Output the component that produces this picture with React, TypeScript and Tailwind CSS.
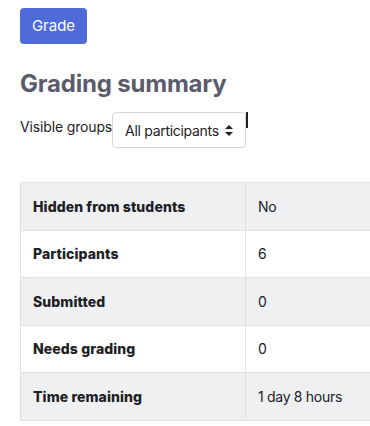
const rows = [
  { label: "Hidden from students", value: "No" },
  { label: "Participants", value: "6" },
  { label: "Submitted", value: "0" },
  { label: "Needs grading", value: "0" },
  { label: "Time remaining", value: "1 day 8 hours" },
];

export default function App() {
  return (
    <div className="w-[370px] h-[426px] overflow-hidden bg-white font-['Inter',sans-serif] text-[#1d2125]">
      <div className="pl-5 pt-2">
        <button className="h-9 w-[67px] rounded-[4px] bg-[#4f6bd8] text-[15px] text-white">
          Grade
        </button>
        <h2 className="mt-[25px] text-[24px] font-bold leading-[30px] tracking-[-0.2px] text-[#5b5c6b]">
          Grading summary
        </h2>
        <div className="mt-[13px] flex items-start">
          <span className="pt-[4px] text-[14px] tracking-[-0.15px]">Visible groups</span>
          <div className="flex h-9 w-[134px] items-center rounded-[4px] border border-[#d3d7dc] pl-3 text-[14px] tracking-[-0.3px]">
            All participants
            <svg width="8" height="11" viewBox="0 0 8 11" className="ml-[6px]">
              <path d="M4 0 L8 4 L0 4 Z M0 7 L8 7 L4 11 Z" fill="#1d2125" />
            </svg>
          </div>
          <div className="h-4 w-[1.5px] bg-[#1d2125]" />
        </div>
        <table className="mt-[34px] w-[400px] border-collapse text-[14px]">
          <tbody>
            {rows.map((r, i) => (
              <tr key={r.label} className={i % 2 === 0 ? "bg-[#eff0f2]" : "bg-white"}>
                <td className="h-[47.5px] w-[225px] border border-[#dee2e6] px-3 font-extrabold tracking-[0.1px]">{r.label}</td>
                <td className="h-[47.5px] border border-[#dee2e6] px-3 tracking-[-0.3px]">{r.value}</td>
              </tr>
            ))}
          </tbody>
        </table>
      </div>
    </div>
  );
}
